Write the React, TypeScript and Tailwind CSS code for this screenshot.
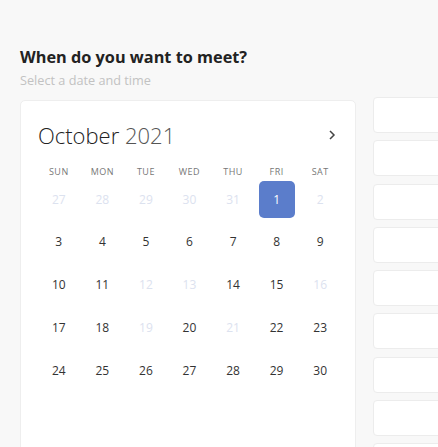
import React from 'react';

const weeks: { d: number; muted?: boolean; selected?: boolean }[][] = [
  [{ d: 27, muted: true }, { d: 28, muted: true }, { d: 29, muted: true }, { d: 30, muted: true }, { d: 31, muted: true }, { d: 1, selected: true }, { d: 2, muted: true }],
  [{ d: 3 }, { d: 4 }, { d: 5 }, { d: 6 }, { d: 7 }, { d: 8 }, { d: 9 }],
  [{ d: 10 }, { d: 11 }, { d: 12, muted: true }, { d: 13, muted: true }, { d: 14 }, { d: 15 }, { d: 16, muted: true }],
  [{ d: 17 }, { d: 18 }, { d: 19, muted: true }, { d: 20 }, { d: 21, muted: true }, { d: 22 }, { d: 23 }],
  [{ d: 24 }, { d: 25 }, { d: 26 }, { d: 27 }, { d: 28 }, { d: 29 }, { d: 30 }],
];

const days = ['Sun', 'Mon', 'Tue', 'Wed', 'Thu', 'Fri', 'Sat'];

export default function App() {
  return (
    <div className="w-[438px] h-[447px] overflow-hidden bg-[#f8f8f8] font-['Open_Sans',sans-serif] pt-[45px] pl-[20px]">
      <h1 className="text-[16.3px] font-bold text-[#222] leading-[24px]">When do you want to meet?</h1>
      <p className="text-[12.7px] text-[#c2c2c2] leading-[16px] mt-[3px]">Select a date and time</p>

      <div className="flex gap-[17px] mt-[12px]">
        {/* Calendar */}
        <div className="w-[336px] h-[360px] shrink-0 bg-white border border-[#eeeeee] rounded-[5px] pl-[16px] pr-[13px] pt-[16px]">
          <div className="flex items-center justify-between pl-[1px] h-[36px]">
            <div className="text-[22px] font-light text-[#222] leading-[36px]">
              October <span className="text-[#555]">2021</span>
            </div>
            <svg width="12" height="12" viewBox="0 0 12 12" className="mr-[4px]">
              <path d="M4 2l4 4-4 4" fill="none" stroke="#444" strokeWidth="1.5" />
            </svg>
          </div>

          <div className="grid grid-cols-7 mt-[12px]">
            {days.map((d) => (
              <div key={d} className="text-center text-[9px] uppercase tracking-[0.5px] text-[#777] leading-[14px]">
                {d}
              </div>
            ))}
          </div>

          <div className="grid grid-cols-7 mt-[2px] gap-y-[5.8px]">
            {weeks.flat().map((c, i) => (
              <div key={i} className="flex justify-center">
                <div
                  className={
                    c.selected
                      ? 'w-[36px] h-[37px] flex items-center justify-center rounded-[5px] bg-[#5b7dcb] text-white text-[12px]'
                      : `w-[36px] h-[37px] flex items-center justify-center text-[12px] ${c.muted ? 'text-[#dce2ef]' : 'text-[#333]'}`
                  }
                >
                  {c.d}
                </div>
              </div>
            ))}
          </div>
        </div>

        {/* Time slots */}
        <div className="flex flex-col gap-[7.3px] flex-1 -mt-[3px]">
          {Array.from({ length: 9 }).map((_, i) => (
            <div key={i} className="h-[36px] w-[100px] bg-white border border-[#ececec] rounded-[4px] shrink-0" />
          ))}
        </div>
      </div>
    </div>
  );
}
